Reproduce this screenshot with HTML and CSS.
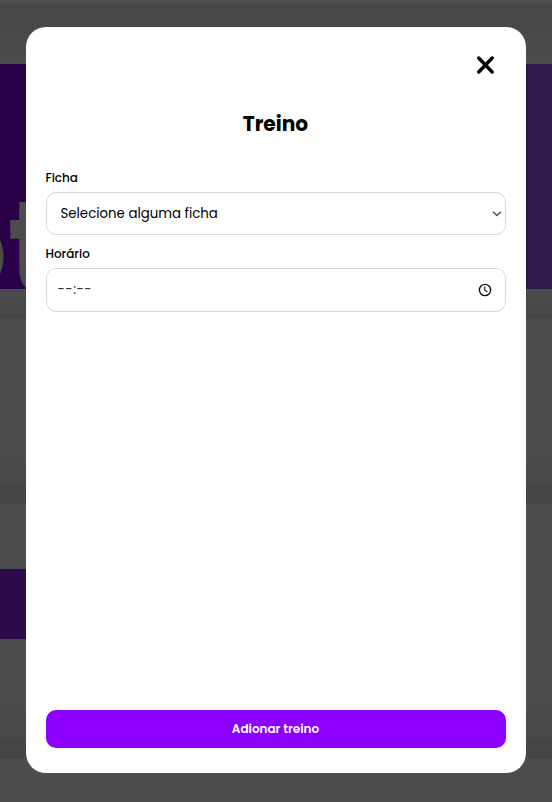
FILE: index.html
```html
<!DOCTYPE html>
<html lang="pt-BR">
<head>
<meta charset="utf-8">
<title>Treino</title>
<link rel="stylesheet" href="styles.css">
</head>
<body>
<div class="page" aria-hidden="true">
  <div class="strip"></div>
  <div class="header-gap"></div>
  <div class="banner"><span class="banner-text">ot</span></div>
  <div class="banner-gap"></div>
  <div class="panel"></div>
  <div class="panel-gap"></div>
  <div class="panel panel-tall"><div class="accent"></div></div>
  <div class="panel-gap"></div>
</div>
<main class="modal" role="dialog">
  <button class="close" type="button" aria-label="Fechar">
    <svg width="20" height="20" viewBox="0 0 20 20"><path d="M3.7 3 17.2 17M17.2 3 3.7 17" fill="none" stroke="#000" stroke-width="3.5" stroke-linecap="round"/></svg>
  </button>
  <h1><span>Treino</span></h1>
  <div class="label"><span class="label-ficha">Ficha</span></div>
  <div class="field select">
    <span class="select-text">Selecione alguma ficha</span>
    <svg class="chevron" width="10" height="6" viewBox="0 0 10 6"><path d="M1 .7 5 4.5 9 .7" fill="none" stroke="#555" stroke-width="1.5"/></svg>
  </div>
  <div class="label label-second"><span class="label-time">Horário</span></div>
  <div class="field time">
    <span class="time-text">--:--</span>
    <svg class="clock" width="14" height="14" viewBox="0 0 14 14"><circle cx="7" cy="7" r="5.6" fill="none" stroke="#111" stroke-width="1.4"/><path d="M6.8 3.5V7.2L9.4 8.8" fill="none" stroke="#111" stroke-width="1.1"/></svg>
  </div>
  <button class="submit" type="button"><span>Adionar treino</span></button>
</main>
</body>
</html>
```
FILE: styles.css
```css
* { box-sizing: border-box; }
body {
  margin: 0;
  width: 552px;
  height: 802px;
  overflow: hidden;
  padding: 27px 26px 29px;
  background: #4c4c4c;
  font-family: Poppins, Inter, "Liberation Sans", sans-serif;
  color: #000;
}
.page {
  position: absolute;
  inset: 0;
  overflow: hidden;
}
.strip { height: 4px; background: #4c4c4c; }
.header-gap { height: 60px; background: linear-gradient(#464646, #4c4c4c); }
.banner {
  position: relative;
  height: 225px;
  overflow: hidden;
  background: linear-gradient(90deg, #2a0048, #2f1a4c);
}
.banner-text {
  position: absolute;
  right: 491px;
  top: 111px;
  font-size: 132px;
  font-weight: 700;
  line-height: 145px;
  color: #4c4c4c;
}
.banner-gap { height: 30px; background: linear-gradient(#4b4b4b, #464646); }
.panel { height: 165px; background: linear-gradient(#4c4c4c 80%, #494949); }
.panel-gap { height: 20px; background: #454545; }
.panel-tall { height: 235px; padding-top: 65px; }
.accent { width: 60px; height: 70px; background: #2d0a4a; }
.modal {
  position: relative;
  display: flex;
  flex-direction: column;
  height: 746px;
  padding: 25px 20px;
  border-radius: 20px;
  background: #fff;
}
button { border: 0; padding: 0; font-family: inherit; }
.close {
  align-self: flex-end;
  display: grid;
  place-items: center;
  width: 26px;
  height: 26px;
  margin-right: 8px;
  background: none;
}
h1 {
  margin: 31px 0 0;
  padding-right: 1px;
  height: 30px;
  text-align: center;
  font-size: 20.2px;
  font-weight: 700;
  line-height: 30px;
}
.label {
  height: 18px;
  margin-top: 30px;
  margin-left: -0.5px;
  font-size: 12px;
  font-weight: 500;
  line-height: 18px;
}
.label-second { margin-top: 10px; }
.field {
  display: flex;
  align-items: center;
  justify-content: space-between;
  height: 43px;
  margin-top: 5px;
  border: 1px solid #d8d8d8;
  border-radius: 10px;
}
.select { padding: 0 3px 0 13.5px; font-size: 13.33px; }
.time { height: 44px; padding: 0 13px 0 10.5px; font-size: 13.33px; color: #333; }
.time-text { letter-spacing: 0.5px; }
.submit {
  height: 38px;
  margin-top: auto;
  padding-right: 1px;
  border-radius: 10px;
  background: #8c00ff;
  color: #fff;
  font-size: 12px;
  font-weight: 600;
}
```
